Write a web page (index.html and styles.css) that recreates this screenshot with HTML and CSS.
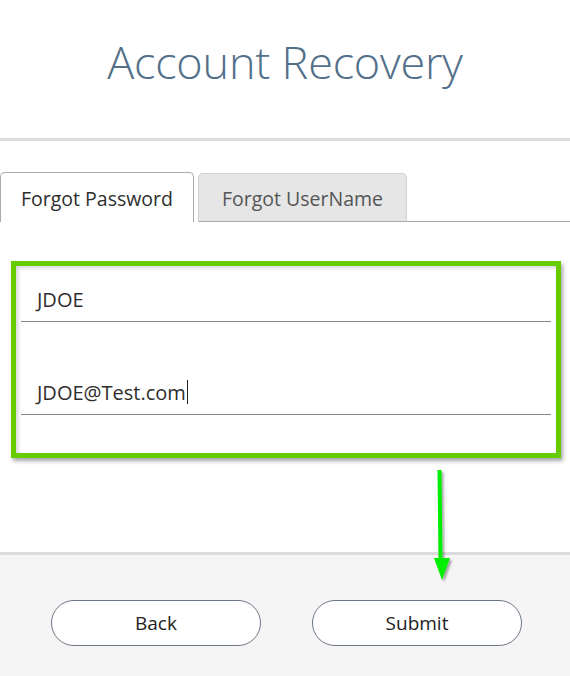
FILE: index.html
```html
<!DOCTYPE html>
<html>
<head>
<meta charset="utf-8">
<link rel="stylesheet" href="styles.css">
</head>
<body>
<div class="page">
  <header class="header">
    <h1 class="title">Account Recovery</h1>
  </header>
  <main class="main">
    <div class="tabs">
      <div class="tab tab-active">Forgot Password</div>
      <div class="tab tab-inactive">Forgot UserName</div>
      <div class="tab-rest"></div>
    </div>
    <div class="form-box">
      <div class="field field-first"><span class="value">JDOE</span></div>
      <div class="field field-second"><span class="value">JDOE@Test.com</span><span class="caret"></span></div>
    </div>
  </main>
  <footer class="footer">
    <button class="btn">Back</button>
    <button class="btn">Submit</button>
  </footer>
  <svg class="arrow" width="40" height="140" viewBox="0 0 40 140">
    <defs>
      <filter id="sh" x="-50%" y="-20%" width="200%" height="140%">
        <feDropShadow dx="2" dy="2" stdDeviation="1.2" flood-color="#000" flood-opacity="0.35"/>
      </filter>
    </defs>
    <g filter="url(#sh)">
      <path d="M8.5 10 L12.5 10 L13.5 100 L9.5 100 Z" fill="#00ee00"/>
      <path d="M5 98 L21 98 L13 120 Z" fill="#00ee00"/>
    </g>
  </svg>
</div>
</body>
</html>
```

FILE: styles.css
```css
* { box-sizing: border-box; }
html, body { margin: 0; padding: 0; background: #fff; }
body { font-family: "Open Sans", "Noto Sans", sans-serif; }
.page { position: relative; width: 570px; height: 676px; overflow: hidden; display: flex; flex-direction: column; }
.header { height: 141px; border-bottom: 3px solid #dcdcdc; display: flex; justify-content: center; }
.title { margin: 0; padding-top: 32px; font-weight: 300; font-size: 45px; line-height: 60px; color: #52708a; letter-spacing: -0.2px; }
.main { height: 411px; padding-top: 31px; }
.tabs { display: flex; align-items: flex-end; height: 50px; }
.tab { height: 50px; font-size: 19.5px; display: flex; align-items: center; justify-content: center; padding-top: 1px; border-radius: 5px 5px 0 0; }
.tab-active { width: 194px; border: 1px solid #ababab; border-bottom: none; background: #fff; color: #2e2e2e; }
.tab-inactive { width: 209px; margin-left: 4px; height: 49px; border: 1px solid #d2d2d2; border-bottom: 1px solid #a8a8a8; background: #e6e6e6; color: #555; }
.tab-rest { flex: 1; border-bottom: 1px solid #a8a8a8; height: 1px; }
.form-box { margin: 39px 0 0 11px; width: 550px; height: 197px; border: 5px solid #66cc00; padding: 0 5px; box-shadow: 2px 3px 4px rgba(0,0,0,0.35), inset 2px 2px 4px rgba(0,0,0,0.18); background: #fff; }
.field { border-bottom: 1px solid #858585; padding-left: 16px; font-size: 20px; color: #2e2e2e; display: flex; align-items: flex-end; }
.field-first { height: 56px; padding-bottom: 8px; }
.field-second { height: 93px; padding-bottom: 8px; }
.caret { display: inline-block; width: 1px; height: 24px; background: #222; margin-left: 1px; margin-bottom: 2px; }
.footer { flex: 1; border-top: 3px solid #dcdcdc; background: #f5f5f5; display: flex; gap: 51px; padding: 45px 0 0 51px; }
.btn { width: 210px; height: 46px; border: 1px solid #6b7683; border-radius: 23px; background: #fff; font-family: "Open Sans", "Noto Sans", sans-serif; font-size: 19px; color: #222; padding: 0; }
.arrow { position: absolute; left: 429px; top: 460px; }
```
